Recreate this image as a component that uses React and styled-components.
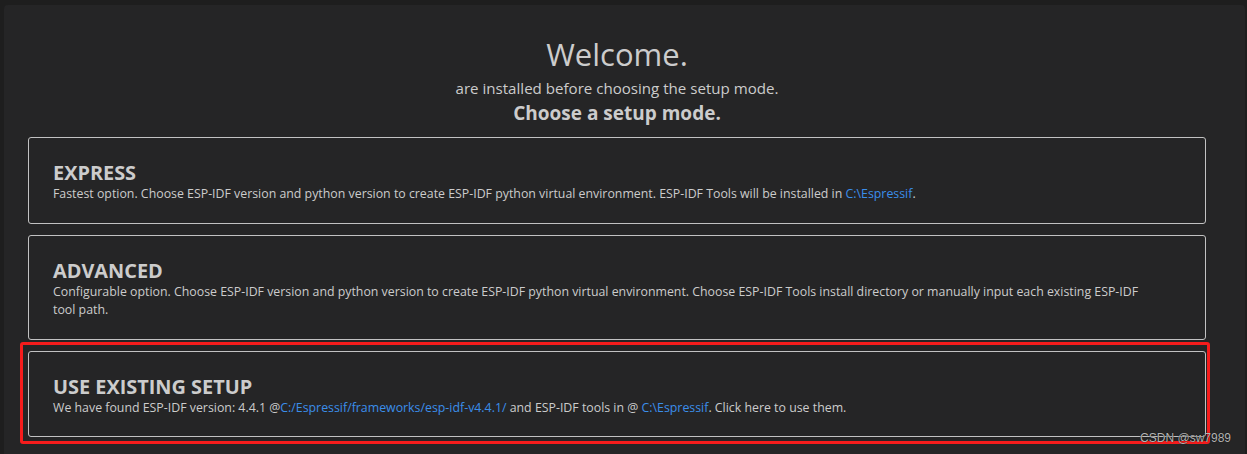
import React from "react";
import styled, { createGlobalStyle } from "styled-components";

const GlobalStyle = createGlobalStyle`
  html, body {
    margin: 0;
    padding: 0;
    background: #1e1e1e;
    height: 100%;
    overflow: hidden;
  }
  body {
    font-family: "Open Sans", "Noto Sans", sans-serif;
    color: #cccccc;
  }
`;

const modes = [
  {
    id: "express",
    title: "EXPRESS",
    body: [
      "Fastest option. Choose ESP-IDF version and python version to create ESP-IDF python virtual environment. ESP-IDF Tools will be installed in ",
      { link: "C:\\Espressif" },
      ".",
    ],
  },
  {
    id: "advanced",
    title: "ADVANCED",
    body: [
      "Configurable option. Choose ESP-IDF version and python version to create ESP-IDF python virtual environment. Choose ESP-IDF Tools install directory or manually input each existing ESP-IDF tool path.",
    ],
  },
  {
    id: "existing",
    title: "USE EXISTING SETUP",
    marked: true,
    body: [
      "We have found ESP-IDF version: 4.4.1 @",
      { link: "C:/Espressif/frameworks/esp-idf-v4.4.1/" },
      " and ESP-IDF tools in @ ",
      { link: "C:\\Espressif" },
      ". Click here to use them.",
    ],
  },
];

const App = () => {
  return (
    <>
      <GlobalStyle />
      <StPage>
        <StPanel>
          <StHeader>
            <StWelcome>Welcome.</StWelcome>
            <StSubtitle>are installed before choosing the setup mode.</StSubtitle>
            <StChoose>Choose a setup mode.</StChoose>
          </StHeader>
          <StModeList>
            {modes.map((mode) => (
              <StModeSlot key={mode.id}>
                <StModeCard>
                  <StModeTitle>{mode.title}</StModeTitle>
                  <StModeText>
                    {mode.body.map((part, i) =>
                      typeof part === "string" ? (
                        part
                      ) : (
                        <StLink key={i}>{part.link}</StLink>
                      )
                    )}
                  </StModeText>
                </StModeCard>
                {mode.marked && <StRedFrame />}
              </StModeSlot>
            ))}
          </StModeList>
        </StPanel>
        <StWatermark>CSDN @sw7989</StWatermark>
      </StPage>
    </>
  );
};

const StPage = styled.div`
  position: relative;
  height: 100vh;
  padding: 5px 2px 0 4px;
  box-sizing: border-box;
`;

const StPanel = styled.div`
  height: 100%;
  background: #252526;
  border-radius: 4px 4px 0 0;
  padding: 30px 39px 0 24px;
  box-sizing: border-box;
`;

const StHeader = styled.div`
  display: flex;
  flex-direction: column;
  align-items: center;
  text-align: center;
`;

const StWelcome = styled.h1`
  margin: 0;
  font-size: 31px;
  line-height: 38px;
  font-weight: 400;
  color: #cccccc;
`;

const StSubtitle = styled.p`
  margin: 0;
  font-size: 15.1px;
  line-height: 30px;
`;

const StChoose = styled.h3`
  margin: 0;
  font-size: 19px;
  line-height: 21px;
  font-weight: 700;
`;

const StModeList = styled.div`
  margin-top: 13px;
  display: flex;
  flex-direction: column;
  gap: 11px;
`;

const StModeSlot = styled.div`
  position: relative;
`;

const StModeCard = styled.div`
  border: 1px solid #c2c2c2;
  border-radius: 3px;
  padding: 23px 48px 19px 24px;
`;

const StModeTitle = styled.h2`
  margin: 0;
  font-size: 19.9px;
  line-height: 24px;
  font-weight: 700;
  color: #cccccc;
`;

const StModeText = styled.p`
  margin: 0;
  font-size: 12.35px;
  line-height: 18.5px;
`;

const StLink = styled.span`
  color: #3b8eea;
`;

const StRedFrame = styled.div`
  position: absolute;
  top: -9px;
  left: -8px;
  right: -4px;
  bottom: -7px;
  border: 3px solid #f51c1c;
  border-radius: 3px;
  pointer-events: none;
`;

const StWatermark = styled.div`
  position: absolute;
  right: 16px;
  top: 431px;
  font-family: "Liberation Sans", Arial, sans-serif;
  font-size: 12px;
  color: #b4b4b4;
  text-shadow: 0 0 1px #000;
`;

export default App;
